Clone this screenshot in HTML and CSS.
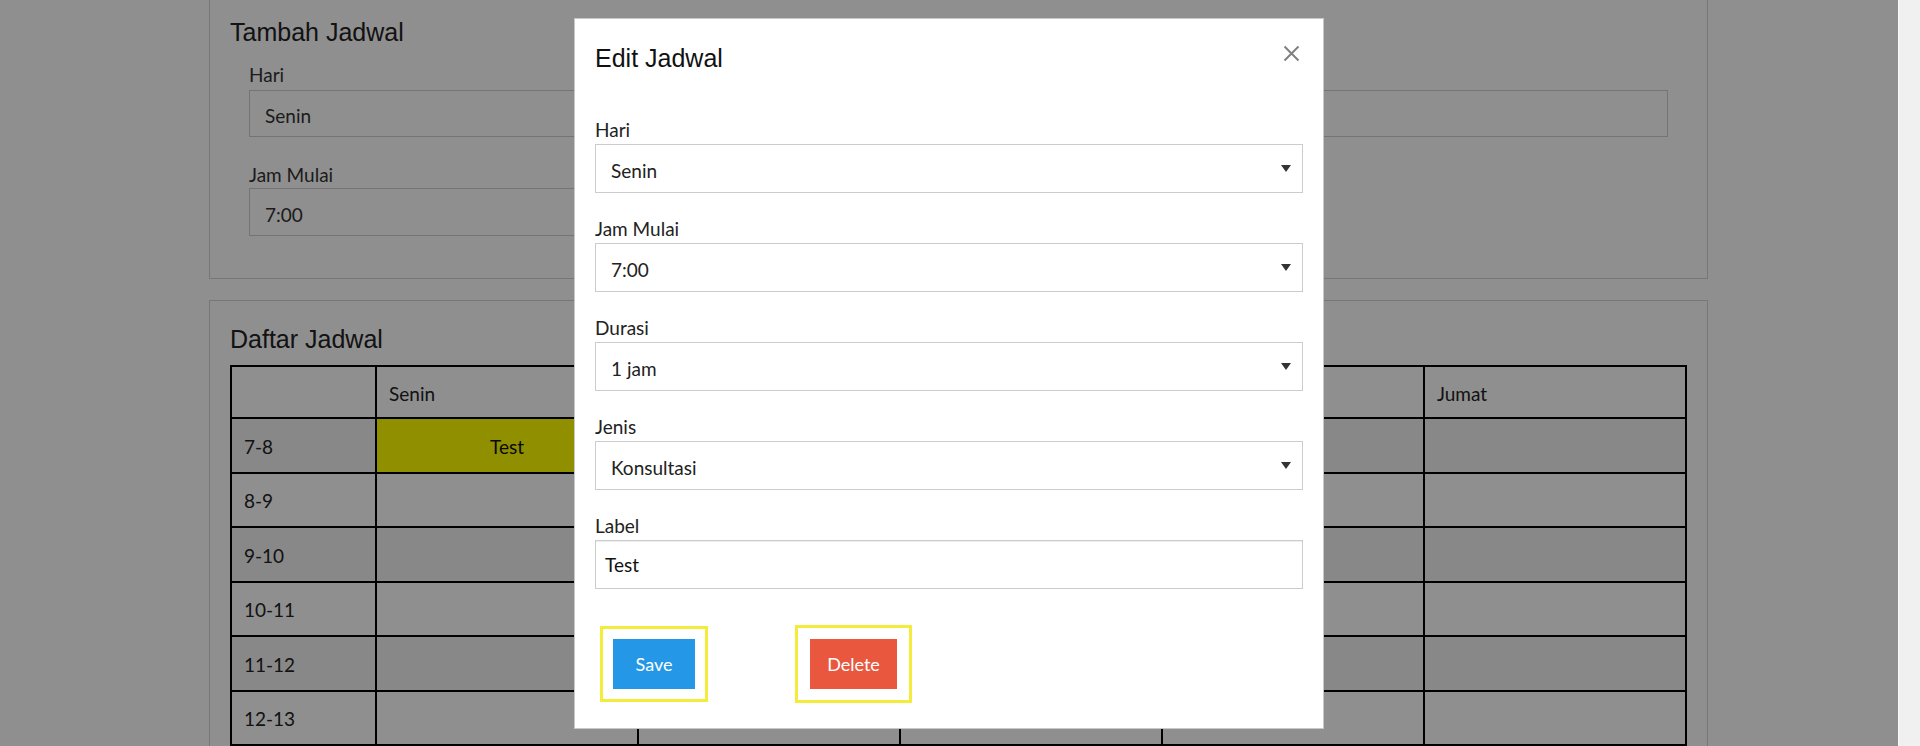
FILE: index.html
```html
<!DOCTYPE html>
<html lang="id">
<head>
<meta charset="utf-8">
<title>Jadwal</title>
<link rel="stylesheet" href="styles.css">
</head>
<body>
<div class="page">
  <section class="card card-first">
    <h2 class="card-title">Tambah Jadwal</h2>
    <div class="form">
      <div class="bg-group">
        <label class="bg-label">Hari</label>
        <div class="bg-input">Senin</div>
      </div>
      <div class="bg-group bg-group-second">
        <label class="bg-label bg-label-tight">Jam Mulai</label>
        <div class="bg-input bg-input-half">7:00</div>
      </div>
    </div>
  </section>

  <section class="card card-second">
    <h2 class="card-title">Daftar Jadwal</h2>
    <table class="schedule">
      <colgroup>
        <col class="col-time">
        <col><col><col><col><col>
      </colgroup>
      <thead>
        <tr><th></th><th>Senin</th><th>Selasa</th><th>Rabu</th><th>Kamis</th><th>Jumat</th></tr>
      </thead>
      <tbody>
        <tr><td>7-8</td><td class="slot-filled">Test</td><td></td><td></td><td></td><td></td></tr>
        <tr><td>8-9</td><td></td><td></td><td></td><td></td><td></td></tr>
        <tr><td>9-10</td><td></td><td></td><td></td><td></td><td></td></tr>
        <tr><td>10-11</td><td></td><td></td><td></td><td></td><td></td></tr>
        <tr><td>11-12</td><td></td><td></td><td></td><td></td><td></td></tr>
        <tr><td>12-13</td><td></td><td></td><td></td><td></td><td></td></tr>
      </tbody>
    </table>
  </section>
</div>

<div class="scroll-track"></div>

<div class="overlay">
  <div class="modal">
    <div class="modal-header">
      <h3 class="modal-title">Edit Jadwal</h3>
      <svg class="modal-close" width="17" height="17" viewBox="0 0 17 17" aria-hidden="true">
        <path d="M1.5 1.5 L15.5 15.5 M15.5 1.5 L1.5 15.5" stroke="#808080" stroke-width="2" fill="none" stroke-linecap="butt"/>
      </svg>
    </div>

    <div class="field">
      <label class="field-label">Hari</label>
      <div class="select"><span>Senin</span><svg class="caret" width="10" height="7" viewBox="0 0 10 7"><path d="M0 0 H10 L5 7 Z" fill="#333"/></svg></div>
    </div>
    <div class="field">
      <label class="field-label">Jam Mulai</label>
      <div class="select"><span>7:00</span><svg class="caret" width="10" height="7" viewBox="0 0 10 7"><path d="M0 0 H10 L5 7 Z" fill="#333"/></svg></div>
    </div>
    <div class="field">
      <label class="field-label">Durasi</label>
      <div class="select"><span>1 jam</span><svg class="caret" width="10" height="7" viewBox="0 0 10 7"><path d="M0 0 H10 L5 7 Z" fill="#333"/></svg></div>
    </div>
    <div class="field">
      <label class="field-label">Jenis</label>
      <div class="select"><span>Konsultasi</span><svg class="caret" width="10" height="7" viewBox="0 0 10 7"><path d="M0 0 H10 L5 7 Z" fill="#333"/></svg></div>
    </div>
    <div class="field field-last">
      <label class="field-label">Label</label>
      <div class="text-input">Test</div>
    </div>

    <div class="modal-actions">
      <div class="focus-box"><button class="btn btn-save">Save</button></div>
      <div class="focus-box focus-box-wide"><button class="btn btn-delete">Delete</button></div>
    </div>
  </div>
</div>
</body>
</html>
```
FILE: styles.css
```css
html, body {
  margin: 0;
  padding: 0;
  height: 100%;
  overflow: hidden;
  background: #ffffff;
  font-family: Lato, "Open Sans", "DejaVu Sans", sans-serif;
  color: #333;
}

.page {
  width: 1499px;
  margin-left: 209px;
}

.card {
  border: 1px solid #d5d5d5;
  padding: 24px 20px 42px;
  box-sizing: border-box;
}

.card-first {
  margin-top: -7px;
}

.card-second {
  margin-top: 21px;
  padding-bottom: 40px;
}

.card-title {
  margin: 0;
  font-family: "Liberation Sans", Arial, sans-serif;
  font-weight: normal;
  font-size: 25px;
  line-height: 28px;
  color: #222;
}

.card-first .card-title {
  margin-bottom: 18px;
}

.card-second .card-title {
  margin-bottom: 12px;
}

.form {
  padding: 0 19px;
}

.bg-group-second {
  margin-top: 27px;
}

.bg-label {
  display: block;
  font-size: 19px;
  line-height: 22px;
  margin-bottom: 4px;
  color: #333;
}

.bg-label-tight {
  margin-bottom: 2px;
}

.bg-input {
  height: 47px;
  box-sizing: border-box;
  border: 1px solid #cfcfcf;
  padding: 4px 15px 0;
  display: flex;
  align-items: center;
  font-size: 19px;
  color: #333;
}

.bg-input-half {
  width: 560px;
  height: 48px;
}

.schedule {
  width: 1457px;
  table-layout: fixed;
  border-collapse: separate;
  border-spacing: 0;
  border-top: 2px solid #000;
  border-left: 2px solid #000;
  font-size: 19px;
  color: #222;
}

.col-time {
  width: 145px;
}

.schedule th,
.schedule td {
  border-right: 2px solid #000;
  border-bottom: 2px solid #000;
  padding: 2px 12px 0;
  text-align: left;
  font-weight: normal;
  vertical-align: middle;
}

.schedule th {
  height: 48px;
}

.schedule td {
  height: 50.5px;
}

.schedule tbody tr:nth-child(odd) td {
  background: #f2f2f2;
}

.schedule tbody tr td.slot-filled {
  background: #ffff00;
  text-align: center;
  color: #111;
}

.scroll-track {
  position: fixed;
  top: 0;
  right: 0;
  bottom: 0;
  width: 22px;
  background: #f0f0f0;
  border-left: 1px solid #fafafa;
  box-sizing: border-box;
}

.overlay {
  position: fixed;
  top: 0;
  left: 0;
  bottom: 0;
  right: 22px;
  background: rgba(0, 0, 0, 0.44);
}

.modal {
  width: 750px;
  margin: 18px auto 0;
  box-sizing: border-box;
  background: #fff;
  border: 1px solid #c8c8c8;
  padding: 25px 20px 25px;
}

.modal-header {
  display: flex;
  justify-content: space-between;
  align-items: flex-start;
  margin-bottom: 47px;
}

.modal-title {
  margin: 0;
  font-family: "Liberation Sans", Arial, sans-serif;
  font-weight: normal;
  font-size: 25px;
  line-height: 28px;
  color: #111;
}

.modal-close {
  display: block;
  margin-top: 1px;
  margin-right: 3px;
}

.field {
  margin-bottom: 25px;
}

.field-last {
  margin-bottom: 36px;
}

.field-label {
  display: block;
  font-size: 19px;
  line-height: 22px;
  margin-bottom: 3px;
  color: #222;
}

.select {
  height: 49px;
  box-sizing: border-box;
  border: 1px solid #cccccc;
  display: flex;
  align-items: center;
  justify-content: space-between;
  padding: 3px 11px 0 15px;
  font-size: 19px;
  color: #222;
}

.select .caret {
  display: block;
  margin-top: -3px;
}

.text-input {
  height: 49px;
  box-sizing: border-box;
  border: 1px solid #cccccc;
  box-shadow: inset 0 1px 1px rgba(0, 0, 0, 0.075);
  display: flex;
  align-items: center;
  padding: 0 9px;
  font-size: 19px;
  color: #111;
}

.modal-actions {
  display: flex;
  align-items: center;
  gap: 87px;
  padding-left: 5px;
}

.focus-box {
  border: 3px solid #f4ec3a;
  padding: 10px;
}

.focus-box-wide {
  padding: 11px 12px;
}

.btn {
  display: block;
  height: 50px;
  border: none;
  margin: 0;
  padding: 0;
  font-family: Lato, "Open Sans", sans-serif;
  font-size: 18px;
  color: #ffffff;
  text-align: center;
  cursor: pointer;
}

.btn-save {
  width: 82px;
  background: #2498e6;
}

.btn-delete {
  width: 87px;
  background: #e9573f;
}
```
